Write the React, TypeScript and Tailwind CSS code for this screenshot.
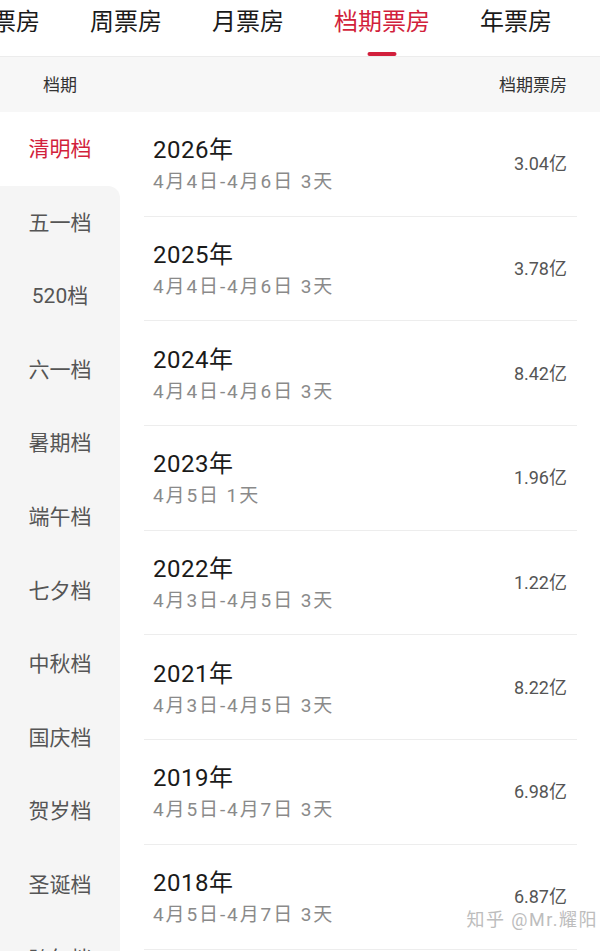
import React from "react";

const tabs = ["日票房", "周票房", "月票房", "档期票房", "年票房"];
const sides = ["清明档", "五一档", "520档", "六一档", "暑期档", "端午档", "七夕档", "中秋档", "国庆档", "贺岁档", "圣诞档", "跨年档"];
const rows = [
  { y: "2026年", d: "4月4日-4月6日 3天", v: "3.04亿" },
  { y: "2025年", d: "4月4日-4月6日 3天", v: "3.78亿" },
  { y: "2024年", d: "4月4日-4月6日 3天", v: "8.42亿" },
  { y: "2023年", d: "4月5日 1天", v: "1.96亿" },
  { y: "2022年", d: "4月3日-4月5日 3天", v: "1.22亿" },
  { y: "2021年", d: "4月3日-4月5日 3天", v: "8.22亿" },
  { y: "2019年", d: "4月5日-4月7日 3天", v: "6.98亿" },
  { y: "2018年", d: "4月5日-4月7日 3天", v: "6.87亿" },
];

export default function App() {
  return (
    <div className="relative h-[951px] w-[600px] overflow-hidden bg-white font-['Roboto','Noto_Sans_CJK_SC',sans-serif]">
      {/* Tabs */}
      <div className="relative h-[57px] border-b border-[#ececec] overflow-hidden">
        <div className="flex gap-[50px] ml-[-32px] whitespace-nowrap">
          {tabs.map((t, i) => (
            <div key={t} className="relative pt-[10px]">
              <span className={`block text-[24px] leading-[24px] ${i === 3 ? "text-[#d21f3c]" : "text-[#1a1a1a]"}`}>{t}</span>
              {i === 3 && (
                <div className="absolute left-1/2 top-[52px] h-[3.5px] w-[29px] -translate-x-1/2 rounded-full bg-[#d21f3c]" />
              )}
            </div>
          ))}
        </div>
      </div>
      {/* Header */}
      <div className="flex h-[55px] items-center justify-between bg-[#f7f7f7] pl-[43px] pr-[33px] pt-[2px] text-[17px] text-[#333]">
        <span>档期</span>
        <span>档期票房</span>
      </div>
      {/* Body */}
      <div className="flex">
        <div className="w-[120px] shrink-0">
          <div className="flex h-[73.6px] items-center justify-center bg-white pt-[2px] text-[21px] text-[#d21f3c]">{sides[0]}</div>
          <div className="rounded-tr-[12px] bg-[#f5f5f5]">
            {sides.slice(1).map((s) => (
              <div key={s} className="flex h-[73.6px] items-center justify-center pt-[2px] text-[21px] text-[#555]">{s}</div>
            ))}
          </div>
        </div>
        <div className="ml-[24px] mr-[23px] flex-1">
          {rows.map((r) => (
            <div key={r.y} className="flex h-[104.7px] items-center justify-between border-b border-[#ededed] pl-[9px] pr-[10px]">
              <div className="mt-[3px] flex flex-col">
                <span className="text-[24px] leading-[30px] tracking-[0.5px] text-[#1a1a1a]">{r.y}</span>
                <span className="mt-[4px] text-[19px] leading-[26px] tracking-[1.9px] text-[#8a8a8a]">{r.d}</span>
              </div>
              <span className="mt-[1px] text-[18px] leading-[24px] text-[#555]">{r.v}</span>
            </div>
          ))}
        </div>
      </div>
      {/* Watermark */}
      <div className="absolute right-[2px] top-[908px] text-[18px] leading-[24px] tracking-[1.5px] text-[#bdbdbd]">知乎 @Mr.耀阳</div>
    </div>
  );
}
